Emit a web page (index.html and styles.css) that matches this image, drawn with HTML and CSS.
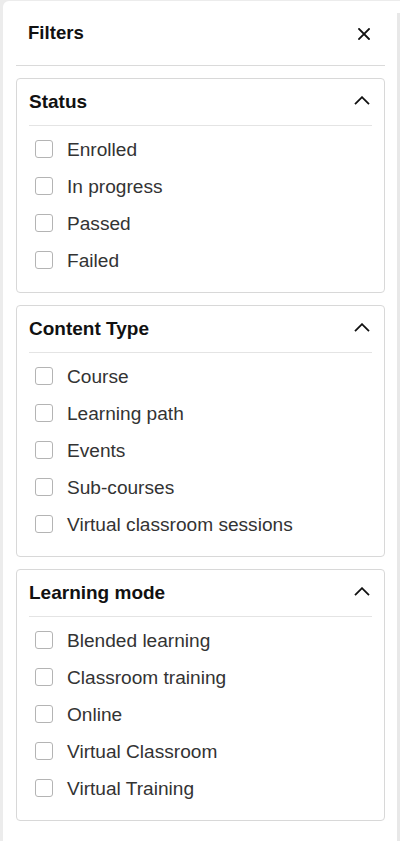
FILE: index.html
```html
<!DOCTYPE html>
<html lang="en">
<head>
<meta charset="utf-8">
<title>Filters</title>
<link rel="stylesheet" href="styles.css">
</head>
<body>
<aside class="panel">
  <header class="panel-head">
    <h1 class="panel-title">Filters</h1>
    <button class="close" aria-label="Close">
      <svg width="12" height="12" viewBox="0 0 12 12"><path d="M1 1L11 11M11 1L1 11" stroke="#111" stroke-width="1.8" fill="none" stroke-linecap="square"/></svg>
    </button>
  </header>

  <section class="card">
    <div class="card-head">
      <h2 class="card-title">Status</h2>
      <svg class="chev" width="16" height="9" viewBox="0 0 16 9"><path d="M1 8.2L8 1.2L15 8.2" stroke="#111" stroke-width="1.8" fill="none"/></svg>
    </div>
    <ul class="opts">
      <li class="opt"><span class="box"></span><span class="lbl">Enrolled</span></li>
      <li class="opt"><span class="box"></span><span class="lbl">In progress</span></li>
      <li class="opt"><span class="box"></span><span class="lbl">Passed</span></li>
      <li class="opt"><span class="box"></span><span class="lbl">Failed</span></li>
    </ul>
  </section>

  <section class="card">
    <div class="card-head">
      <h2 class="card-title">Content Type</h2>
      <svg class="chev" width="16" height="9" viewBox="0 0 16 9"><path d="M1 8.2L8 1.2L15 8.2" stroke="#111" stroke-width="1.8" fill="none"/></svg>
    </div>
    <ul class="opts">
      <li class="opt"><span class="box"></span><span class="lbl">Course</span></li>
      <li class="opt"><span class="box"></span><span class="lbl">Learning path</span></li>
      <li class="opt"><span class="box"></span><span class="lbl">Events</span></li>
      <li class="opt"><span class="box"></span><span class="lbl">Sub-courses</span></li>
      <li class="opt"><span class="box"></span><span class="lbl">Virtual classroom sessions</span></li>
    </ul>
  </section>

  <section class="card">
    <div class="card-head">
      <h2 class="card-title">Learning mode</h2>
      <svg class="chev" width="16" height="9" viewBox="0 0 16 9"><path d="M1 8.2L8 1.2L15 8.2" stroke="#111" stroke-width="1.8" fill="none"/></svg>
    </div>
    <ul class="opts">
      <li class="opt"><span class="box"></span><span class="lbl">Blended learning</span></li>
      <li class="opt"><span class="box"></span><span class="lbl">Classroom training</span></li>
      <li class="opt"><span class="box"></span><span class="lbl">Online</span></li>
      <li class="opt"><span class="box"></span><span class="lbl">Virtual Classroom</span></li>
      <li class="opt"><span class="box"></span><span class="lbl">Virtual Training</span></li>
    </ul>
  </section>
  <div class="scroll-thumb"></div>
</aside>
</body>
</html>
```

FILE: styles.css
```css
* { box-sizing: border-box; }
html, body {
  margin: 0;
  padding: 0;
  height: 100%;
  overflow: hidden;
}
body {
  background: #ececec;
  font-family: "Liberation Sans", Arial, sans-serif;
  color: #333;
}
.panel {
  position: relative;
  margin: 1px 0 0 3px;
  width: 397px;
  height: 840px;
  background: #fff;
  border-top-left-radius: 6px;
  padding: 0 15px 0 13px;
}
.panel-head {
  height: 65px;
  display: flex;
  align-items: center;
  justify-content: space-between;
  padding: 0 15px 0 12px;
  border-bottom: 1px solid #dadada;
}
.panel-title {
  margin: 0;
  font-size: 18.6px;
  font-weight: 700;
  color: #111;
}
.close {
  border: 0;
  background: none;
  padding: 0;
  width: 12px;
  height: 12px;
  display: flex;
  margin-top: 1px;
}
.card {
  margin-top: 12px;
  border: 1px solid #d8d8d8;
  border-radius: 4px;
  padding: 0 12px 14px;
}
.card-head {
  height: 47px;
  display: flex;
  align-items: center;
  justify-content: space-between;
  border-bottom: 1px solid #e4e4e4;
  padding: 0 2px 1px 0;
}
.card-title {
  margin: 0;
  font-size: 19px;
  font-weight: 700;
  color: #111;
}
.chev { display: block; margin-top: -2px; }
.opts {
  list-style: none;
  margin: 0;
  padding: 4px 0 0 6px;
}
.opt {
  height: 37px;
  display: flex;
  align-items: center;
}
.box {
  width: 18px;
  height: 18px;
  border: 1px solid #b4b4b4;
  border-radius: 3px;
  background: #fff;
  margin-right: 14px;
  flex: none;
}
.lbl {
  font-size: 19.1px;
  color: #333;
  line-height: 1;
  padding-top: 2px;
}
.scroll-thumb {
  position: absolute;
  top: 12px;
  right: 0;
  width: 3px;
  height: 840px;
  background: #e8e8e8;
}
```
